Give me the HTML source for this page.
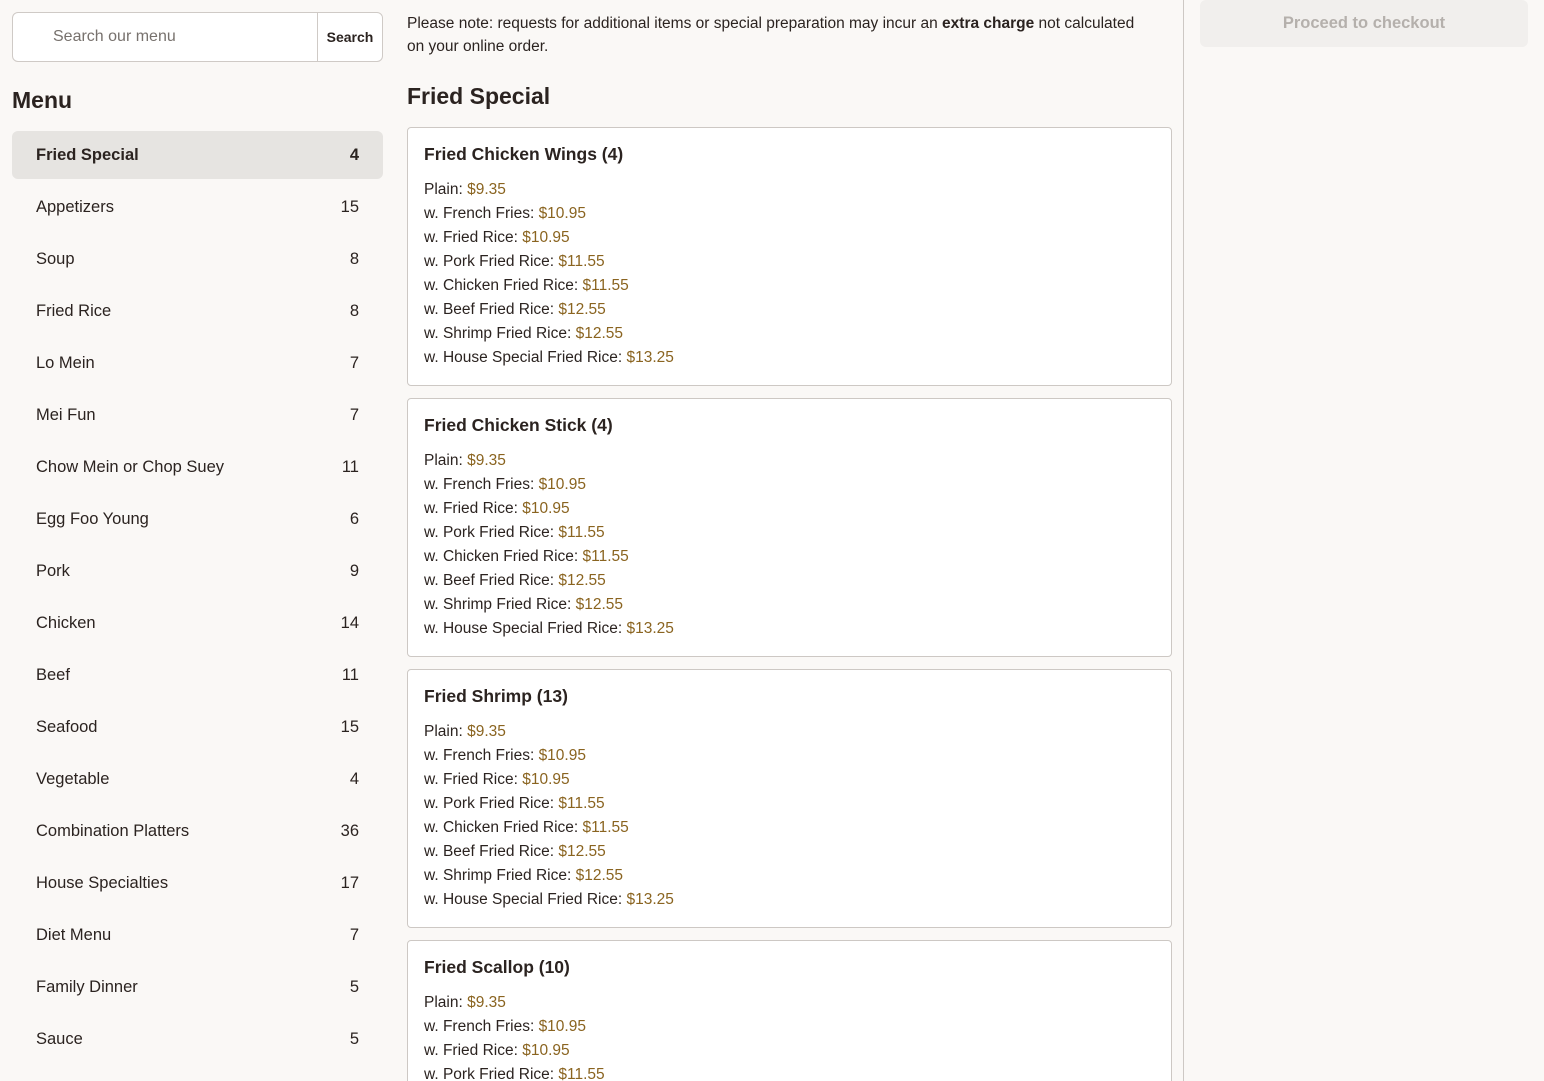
<!DOCTYPE html>
<html><head><meta charset="utf-8"><style>
*{box-sizing:border-box;margin:0;padding:0}
html,body{width:1544px;height:1081px;overflow:hidden}
body{background:#faf8f6;font-family:"Liberation Sans",sans-serif;color:#2b2320;position:relative}
.search{position:absolute;left:12px;top:12px;width:371px;height:50px;border:1px solid #cfcac6;border-radius:6px;background:#fff;display:flex}
.search .in{flex:1;padding-left:40px;line-height:48px;font-size:16px;color:#77716d}
.search .btn{width:65px;border-left:1px solid #cfcac6;line-height:48px;text-align:center;font-weight:bold;font-size:14px}
h2.menu{position:absolute;left:12px;top:87px;font-size:23px;font-weight:bold}
.nav{position:absolute;left:12px;top:131px;width:371px}
.nav div{height:48px;margin-bottom:4px;display:flex;justify-content:space-between;align-items:center;padding:0 24px;font-size:16.5px;border-radius:6px}
.nav .act{background:#e6e4e1;font-weight:bold}
.main{position:absolute;left:407px;top:0;width:765px;height:1081px;overflow:hidden}
.note{font-size:15.5px;line-height:23px;margin-top:12px;padding-right:6px}
h2.sec{font-size:23px;font-weight:bold;margin-top:25px;margin-bottom:17px}
.card{background:#fff;border:1px solid #cdc8c4;border-radius:4px;height:259px;margin-bottom:12px;padding:16px 16px}
.card h3{font-size:17.5px;font-weight:bold;margin-bottom:13px}
.card p{font-size:15.5px;line-height:24px}
.card p span{color:#8a6420}
.div{position:absolute;left:1183px;top:0;width:1px;height:1081px;background:#cdc8c4}
.co{position:absolute;left:1200px;top:0;width:328px;height:47px;background:#f1efed;border-radius:6px;text-align:center;line-height:47px;font-size:16.5px;font-weight:bold;color:#b5b0ac}
</style></head><body>
<div class="search"><div class="in">Search our menu</div><div class="btn">Search</div></div>
<h2 class="menu">Menu</h2>
<div class="nav">
<div class="act"><span>Fried Special</span><span>4</span></div>
<div><span>Appetizers</span><span>15</span></div>
<div><span>Soup</span><span>8</span></div>
<div><span>Fried Rice</span><span>8</span></div>
<div><span>Lo Mein</span><span>7</span></div>
<div><span>Mei Fun</span><span>7</span></div>
<div><span>Chow Mein or Chop Suey</span><span>11</span></div>
<div><span>Egg Foo Young</span><span>6</span></div>
<div><span>Pork</span><span>9</span></div>
<div><span>Chicken</span><span>14</span></div>
<div><span>Beef</span><span>11</span></div>
<div><span>Seafood</span><span>15</span></div>
<div><span>Vegetable</span><span>4</span></div>
<div><span>Combination Platters</span><span>36</span></div>
<div><span>House Specialties</span><span>17</span></div>
<div><span>Diet Menu</span><span>7</span></div>
<div><span>Family Dinner</span><span>5</span></div>
<div><span>Sauce</span><span>5</span></div>
</div>
<div class="main">
<p class="note">Please note: requests for additional items or special preparation may incur an <b>extra charge</b> not calculated<br>on your online order.</p>
<h2 class="sec">Fried Special</h2>
<div class="card"><h3>Fried Chicken Wings (4)</h3>
<p>Plain: <span>$9.35</span></p><p>w. French Fries: <span>$10.95</span></p><p>w. Fried Rice: <span>$10.95</span></p><p>w. Pork Fried Rice: <span>$11.55</span></p><p>w. Chicken Fried Rice: <span>$11.55</span></p><p>w. Beef Fried Rice: <span>$12.55</span></p><p>w. Shrimp Fried Rice: <span>$12.55</span></p><p>w. House Special Fried Rice: <span>$13.25</span></p></div>
<div class="card"><h3>Fried Chicken Stick (4)</h3>
<p>Plain: <span>$9.35</span></p><p>w. French Fries: <span>$10.95</span></p><p>w. Fried Rice: <span>$10.95</span></p><p>w. Pork Fried Rice: <span>$11.55</span></p><p>w. Chicken Fried Rice: <span>$11.55</span></p><p>w. Beef Fried Rice: <span>$12.55</span></p><p>w. Shrimp Fried Rice: <span>$12.55</span></p><p>w. House Special Fried Rice: <span>$13.25</span></p></div>
<div class="card"><h3>Fried Shrimp (13)</h3>
<p>Plain: <span>$9.35</span></p><p>w. French Fries: <span>$10.95</span></p><p>w. Fried Rice: <span>$10.95</span></p><p>w. Pork Fried Rice: <span>$11.55</span></p><p>w. Chicken Fried Rice: <span>$11.55</span></p><p>w. Beef Fried Rice: <span>$12.55</span></p><p>w. Shrimp Fried Rice: <span>$12.55</span></p><p>w. House Special Fried Rice: <span>$13.25</span></p></div>
<div class="card"><h3>Fried Scallop (10)</h3>
<p>Plain: <span>$9.35</span></p><p>w. French Fries: <span>$10.95</span></p><p>w. Fried Rice: <span>$10.95</span></p><p>w. Pork Fried Rice: <span>$11.55</span></p><p>w. Chicken Fried Rice: <span>$11.55</span></p></div>
</div>
<div class="div"></div>
<div class="co">Proceed to checkout</div>
</body></html>
